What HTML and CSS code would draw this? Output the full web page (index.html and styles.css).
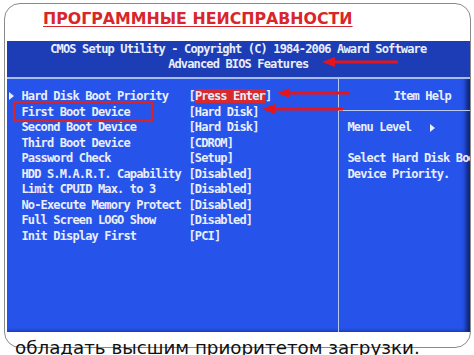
FILE: index.html
```html
<!DOCTYPE html>
<html lang="ru">
<head>
    <meta charset="UTF-8">
    <meta name="viewport" content="width=device-width, initial-scale=1.0">
    <title>Программные неисправности</title>
    <link rel="stylesheet" href="styles.css">
</head>
<body>
    <div class="slide">
        <h1 class="slide-title">ПРОГРАММНЫЕ НЕИСПРАВНОСТИ</h1>

        <!-- Снимок экрана BIOS -->
        <div class="bios">
            <div class="bios-head">
                <div>CMOS Setup Utility - Copyright (C) 1984-2006 Award Software</div>
                <div>Advanced BIOS Features</div>
            </div>
            <div class="bios-body">
                <div class="bios-list">
                    <div class="row"><span class="marker"></span><span>Hard Disk Boot Priority</span><span>[<span class="hl">Press Enter</span>]</span></div>
                    <div class="row"><span></span><span>First Boot Device</span><span>[Hard Disk]</span></div>
                    <div class="row"><span></span><span>Second Boot Device</span><span>[Hard Disk]</span></div>
                    <div class="row"><span></span><span>Third Boot Device</span><span>[CDROM]</span></div>
                    <div class="row"><span></span><span>Password Check</span><span>[Setup]</span></div>
                    <div class="row"><span></span><span>HDD S.M.A.R.T. Capability</span><span>[Disabled]</span></div>
                    <div class="row"><span></span><span>Limit CPUID Max. to 3</span><span>[Disabled]</span></div>
                    <div class="row"><span></span><span>No-Execute Memory Protect</span><span>[Disabled]</span></div>
                    <div class="row"><span></span><span>Full Screen LOGO Show</span><span>[Disabled]</span></div>
                    <div class="row"><span></span><span>Init Display First</span><span>[PCI]</span></div>
                </div>
                <div class="bios-help">
                    <div class="help-title">Item Help</div>
                    <div class="help-text">
                        <div>Menu Level   <span class="marker small"></span></div>
                        <div>&nbsp;</div>
                        <div>Select Hard Disk Boot</div>
                        <div>Device Priority.</div>
                    </div>
                </div>
            </div>

            <!-- Стрелки и рамка поверх снимка -->
            <svg class="marks" width="463" height="291" viewBox="0 0 463 291">
                <rect x="7" y="61" width="138" height="19" fill="none" stroke="#d2262c" stroke-width="2.2"/>
                <g fill="#e3161d">
                    <rect x="325" y="19.5" width="66" height="3"/>
                    <polygon points="315,21 328,16 328,26"/>
                    <rect x="280" y="50.5" width="63" height="3"/>
                    <polygon points="270,52 283,47 283,57"/>
                    <rect x="265" y="66.5" width="71" height="3"/>
                    <polygon points="255,68 268,63 268,73"/>
                </g>
            </svg>
        </div>
    </div>
    <p class="caption">обладать высшим приоритетом загрузки.</p>
</body>
</html>
```

FILE: styles.css
```css
/* Общие стили */
body {
    margin: 0;
    background-color: #fff;
    overflow: hidden;
    height: 355px;
}

.slide {
    margin: 3px 3px 0 4px;
    height: 343px;
    border: 1.5px solid #8a8a8a;
    border-radius: 16px;
}

.slide-title {
    margin: 5px 0 0 0;
    padding-left: 38px;
    font-family: "DejaVu Sans", sans-serif;
    font-size: 15.8px;
    line-height: 20px;
    font-weight: bold;
    color: #d8262a;
    text-decoration: underline;
    text-underline-offset: 2px;
}

/* Экран BIOS */
.bios {
    position: relative;
    margin: 12px 0 0 1.5px;
    height: 291px;
    background-color: #2654ea;
    font-family: "DejaVu Sans Mono", monospace;
    font-weight: bold;
    font-size: 12px;
    letter-spacing: -0.85px;
    color: #e9eefa;
    overflow: hidden;
    box-shadow: inset -4px 0 4px rgba(5, 15, 70, 0.7);
}

.bios-head {
    height: 35px;
    padding-top: 1px;
    background-color: #1c3db5;
    border-bottom: 2px solid #a9bde9;
    text-align: center;
    line-height: 15px;
}

.bios-head div {
    white-space: pre;
}

.bios-body {
    display: grid;
    grid-template-columns: 331px 1fr;
    height: 253px;
}

.bios-list {
    padding-top: 10px;
}

.row {
    display: grid;
    grid-template-columns: 15px 167px auto;
    line-height: 15.5px;
    white-space: pre;
}

.marker {
    display: inline-block;
    width: 0;
    height: 0;
    margin: 3px 0 0 2px;
    border-left: 5px solid #e9eefa;
    border-top: 4.5px solid transparent;
    border-bottom: 4.5px solid transparent;
}

.marker.small {
    margin: 0;
    vertical-align: -1px;
}

.hl {
    background-color: #d62a2e;
}

.bios-help {
    border-left: 1.5px solid #b8c9ee;
    overflow: hidden;
}

.help-title {
    height: 21px;
    padding: 10px 0 0 55px;
    line-height: 15px;
    border-bottom: 1.5px solid #b8c9ee;
}

.help-text {
    padding: 9px 0 0 9px;
    line-height: 15.5px;
}

.help-text div {
    white-space: pre;
}

.marks {
    position: absolute;
    left: 0;
    top: 0;
}

/* Подпись снизу */
.caption {
    margin: -10px 0 0 15px;
    font-family: "DejaVu Sans", sans-serif;
    font-size: 18.3px;
    line-height: 20px;
    color: #111;
    white-space: nowrap;
}
```
